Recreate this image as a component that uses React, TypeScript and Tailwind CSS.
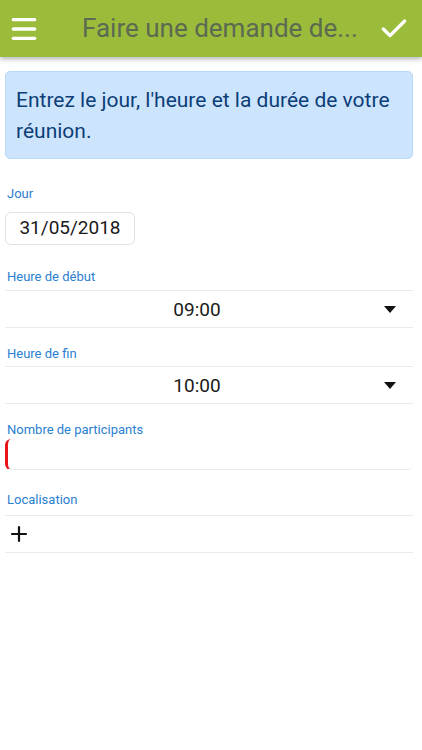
import { Check, Menu, Plus } from 'lucide-react'

const Label = ({ children }: { children: string }) => (
  <p className="px-[7px] text-[13px] leading-[16px] text-[#2a80d0]">{children}</p>
)

const TimeSelect = ({ value }: { value: string }) => (
  <div className="ml-[5px] mr-[9px] flex h-[38px] items-center border-y border-[#ebebeb]">
    <span className="flex-1 pl-[5px] pt-[3px] text-center text-[19px] text-[#1a1a1a]">{value}</span>
    <svg width="12" height="7" viewBox="0 0 12 7" className="mr-[17px]">
      <path d="M0 0h12L6 7z" fill="#111" />
    </svg>
  </div>
)

export default function App() {
  return (
    <div className="h-[750px] w-[422px] bg-white" style={{ fontFamily: 'Roboto, "Noto Sans", sans-serif' }}>
      <header className="flex h-[57px] items-center bg-[#9bbc3a] shadow-[0_2px_5px_rgba(0,0,0,0.3)]">
        <Menu className="ml-[8px] text-white" size={32} strokeWidth={2.5} />
        <h1 className="ml-[42px] flex-1 truncate text-[26px] text-[#5c6a52]">Faire une demande de...</h1>
        <Check className="mr-[12px] text-white" size={32} strokeWidth={2.5} />
      </header>

      <div className="ml-[5px] mr-[9px] mt-[14px] rounded-[5px] border border-[#b8d8f6] bg-[#cce5fd] px-[10px] pt-[13px] pb-[11px] text-[21px] leading-[31px] text-[#0c3e78]">
        Entrez le jour, l'heure et la durée de votre réunion.
      </div>

      <div className="mt-[27px]">
        <Label>Jour</Label>
        <div className="mx-[5px] mt-[10px] flex h-[33px] w-[130px] items-center justify-center rounded-[6px] border border-[#e2e2e2] text-[19px] text-[#1a1a1a]">
          31/05/2018
        </div>
      </div>

      <div className="mt-[24px]">
        <Label>Heure de début</Label>
        <div className="mt-[5px]">
          <TimeSelect value="09:00" />
        </div>
      </div>

      <div className="mt-[18px]">
        <Label>Heure de fin</Label>
        <div className="mt-[4px]">
          <TimeSelect value="10:00" />
        </div>
      </div>

      <div className="mt-[18px]">
        <Label>Nombre de participants</Label>
        <div className="ml-[5px] mr-[9px] mt-[1px] h-[31px] rounded-[6px] border-l-[3px] border-b border-l-[#e8141a] border-b-[#ebebeb]" />
      </div>

      <div className="mt-[22px]">
        <Label>Localisation</Label>
        <div className="ml-[5px] mr-[9px] mt-[7px] flex h-[38px] items-center border-y border-[#ebebeb]">
          <Plus className="ml-[2px] text-[#111]" size={24} strokeWidth={2.2} />
        </div>
      </div>
    </div>
  )
}
